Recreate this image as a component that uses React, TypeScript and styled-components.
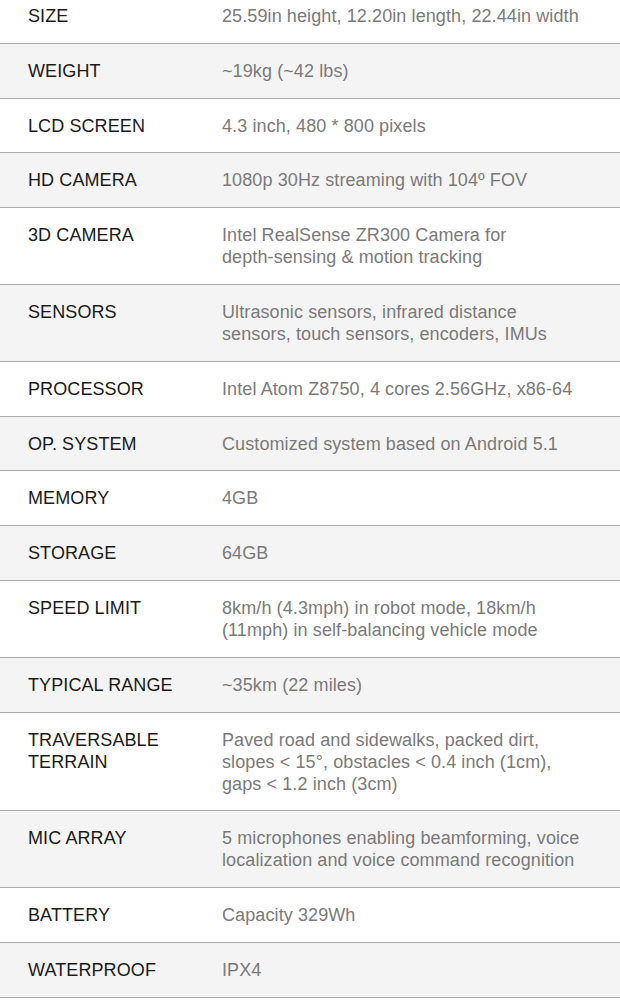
import React from "react";
import styled, { createGlobalStyle } from "styled-components";

const Global = createGlobalStyle`
  html, body { margin: 0; padding: 0; background: #ffffff; }
  body { font-family: "Liberation Sans", Arial, Helvetica, sans-serif; -webkit-font-smoothing: antialiased; }
`;

const Table = styled.div`
  display: flex;
  flex-direction: column;
  margin-top: -11px;
`;

const Row = styled.div<{ $shaded: boolean }>`
  display: grid;
  grid-template-columns: 164px 1fr;
  column-gap: 30px;
  padding: 16px 33px 15.8px 28px;
  background: ${(p) => (p.$shaded ? "#f4f4f4" : "#ffffff")};
  border-bottom: 1px solid #aaaaaa;
  font-size: 18px;
  line-height: 22px;
  letter-spacing: 0.1px;
`;

const Label = styled.div`
  color: #1a1a1a;
  text-transform: uppercase;
`;

const Value = styled.div`
  color: #7a7a7a;
`;

const NoBreak = styled.span`
  white-space: nowrap;
`;

type Spec = { label: string; value: React.ReactNode };

const specs: Spec[] = [
  { label: "SIZE", value: "25.59in height, 12.20in length, 22.44in width" },
  { label: "WEIGHT", value: "~19kg (~42 lbs)" },
  { label: "LCD SCREEN", value: "4.3 inch, 480 * 800 pixels" },
  { label: "HD CAMERA", value: "1080p 30Hz streaming with 104º FOV" },
  {
    label: "3D CAMERA",
    value: (
      <>
        Intel RealSense ZR300 Camera for <NoBreak>depth-sensing</NoBreak> &amp; motion tracking
      </>
    ),
  },
  { label: "SENSORS", value: "Ultrasonic sensors, infrared distance sensors, touch sensors, encoders, IMUs" },
  { label: "PROCESSOR", value: "Intel Atom Z8750, 4 cores 2.56GHz, x86-64" },
  { label: "OP. SYSTEM", value: "Customized system based on Android 5.1" },
  { label: "MEMORY", value: "4GB" },
  { label: "STORAGE", value: "64GB" },
  { label: "SPEED LIMIT", value: "8km/h (4.3mph) in robot mode, 18km/h (11mph) in self-balancing vehicle mode" },
  { label: "TYPICAL RANGE", value: "~35km (22 miles)" },
  {
    label: "TRAVERSABLE TERRAIN",
    value: "Paved road and sidewalks, packed dirt, slopes < 15°, obstacles < 0.4 inch (1cm), gaps < 1.2 inch (3cm)",
  },
  { label: "MIC ARRAY", value: "5 microphones enabling beamforming, voice localization and voice command recognition" },
  { label: "BATTERY", value: "Capacity 329Wh" },
  { label: "WATERPROOF", value: "IPX4" },
];

export default function App() {
  return (
    <>
      <Global />
      <Table>
        {specs.map((s, i) => (
          <Row key={s.label} $shaded={i % 2 === 1}>
            <Label>{s.label}</Label>
            <Value>{s.value}</Value>
          </Row>
        ))}
      </Table>
    </>
  );
}
